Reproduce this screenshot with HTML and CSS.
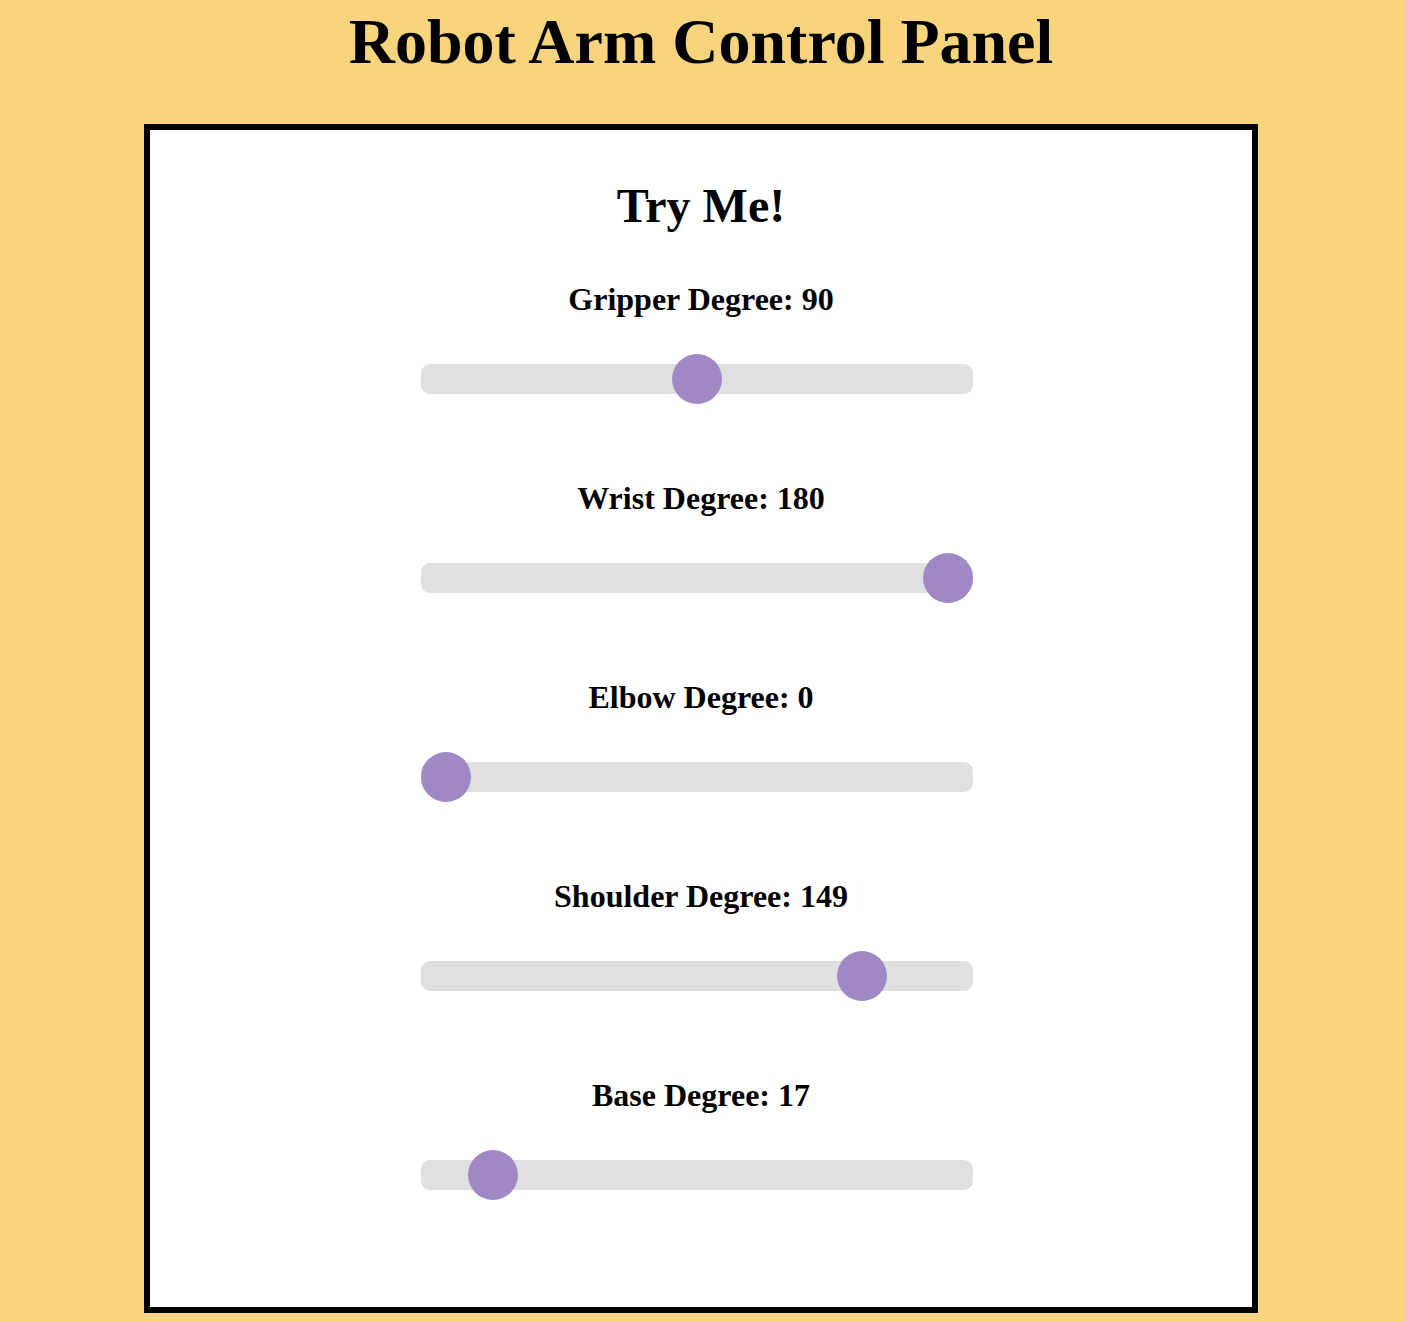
FILE: index.html
```html
<!DOCTYPE html>
<html lang="en">
<head>
<meta charset="utf-8">
<title>Robot Arm Control Panel</title>
<link rel="stylesheet" href="styles.css">
</head>
<body>
<h1 class="title">Robot Arm Control Panel</h1>
<main class="panel">
  <h2 class="panel-title">Try Me!</h2>
  <div class="control">
    <label class="control-label" for="gripper">Gripper Degree: 90</label>
    <input class="slider" id="gripper" type="range" min="0" max="180" value="90">
  </div>
  <div class="control">
    <label class="control-label" for="wrist">Wrist Degree: 180</label>
    <input class="slider" id="wrist" type="range" min="0" max="180" value="180">
  </div>
  <div class="control">
    <label class="control-label" for="elbow">Elbow Degree: 0</label>
    <input class="slider" id="elbow" type="range" min="0" max="180" value="0">
  </div>
  <div class="control">
    <label class="control-label" for="shoulder">Shoulder Degree: 149</label>
    <input class="slider" id="shoulder" type="range" min="0" max="180" value="149">
  </div>
  <div class="control">
    <label class="control-label" for="base">Base Degree: 17</label>
    <input class="slider" id="base" type="range" min="0" max="180" value="17">
  </div>
</main>
</body>
</html>
```
FILE: styles.css
```css
html, body {
  margin: 0;
  padding: 0;
}
body {
  background: #f8d47c;
  font-family: "Liberation Serif", "Times New Roman", serif;
  color: #000;
  padding-right: 3px;
  min-height: 1322px;
  box-sizing: border-box;
}
.title {
  margin: 6px 0 46px;
  font-size: 64px;
  line-height: 72px;
  font-weight: bold;
  text-align: center;
}
.panel {
  display: flex;
  flex-direction: column;
  align-items: center;
  box-sizing: border-box;
  width: 1114px;
  margin: 0 auto;
  background: #fff;
  border: 6px solid #000;
  padding: 48px 0 117px;
}
.panel-title {
  margin: 0 0 47px;
  font-size: 48px;
  line-height: 56px;
  font-weight: bold;
}
.control {
  display: flex;
  flex-direction: column;
  align-items: center;
  margin-bottom: 86px;
}
.control:last-child {
  margin-bottom: 0;
}
.control-label {
  display: block;
  font-size: 32px;
  line-height: 36px;
  font-weight: bold;
  margin-bottom: 47px;
}
.slider {
  -webkit-appearance: none;
  appearance: none;
  display: block;
  width: 552px;
  height: 30px;
  margin: 0 8px 0 0;
  padding: 0;
  background: #e0e0e0;
  border-radius: 9px;
  outline: none;
}
.slider::-webkit-slider-thumb {
  -webkit-appearance: none;
  appearance: none;
  width: 50px;
  height: 50px;
  border-radius: 50%;
  background: #9f89c5;
  border: none;
  cursor: pointer;
}
.slider::-moz-range-thumb {
  width: 50px;
  height: 50px;
  border-radius: 50%;
  background: #9f89c5;
  border: none;
}
```
